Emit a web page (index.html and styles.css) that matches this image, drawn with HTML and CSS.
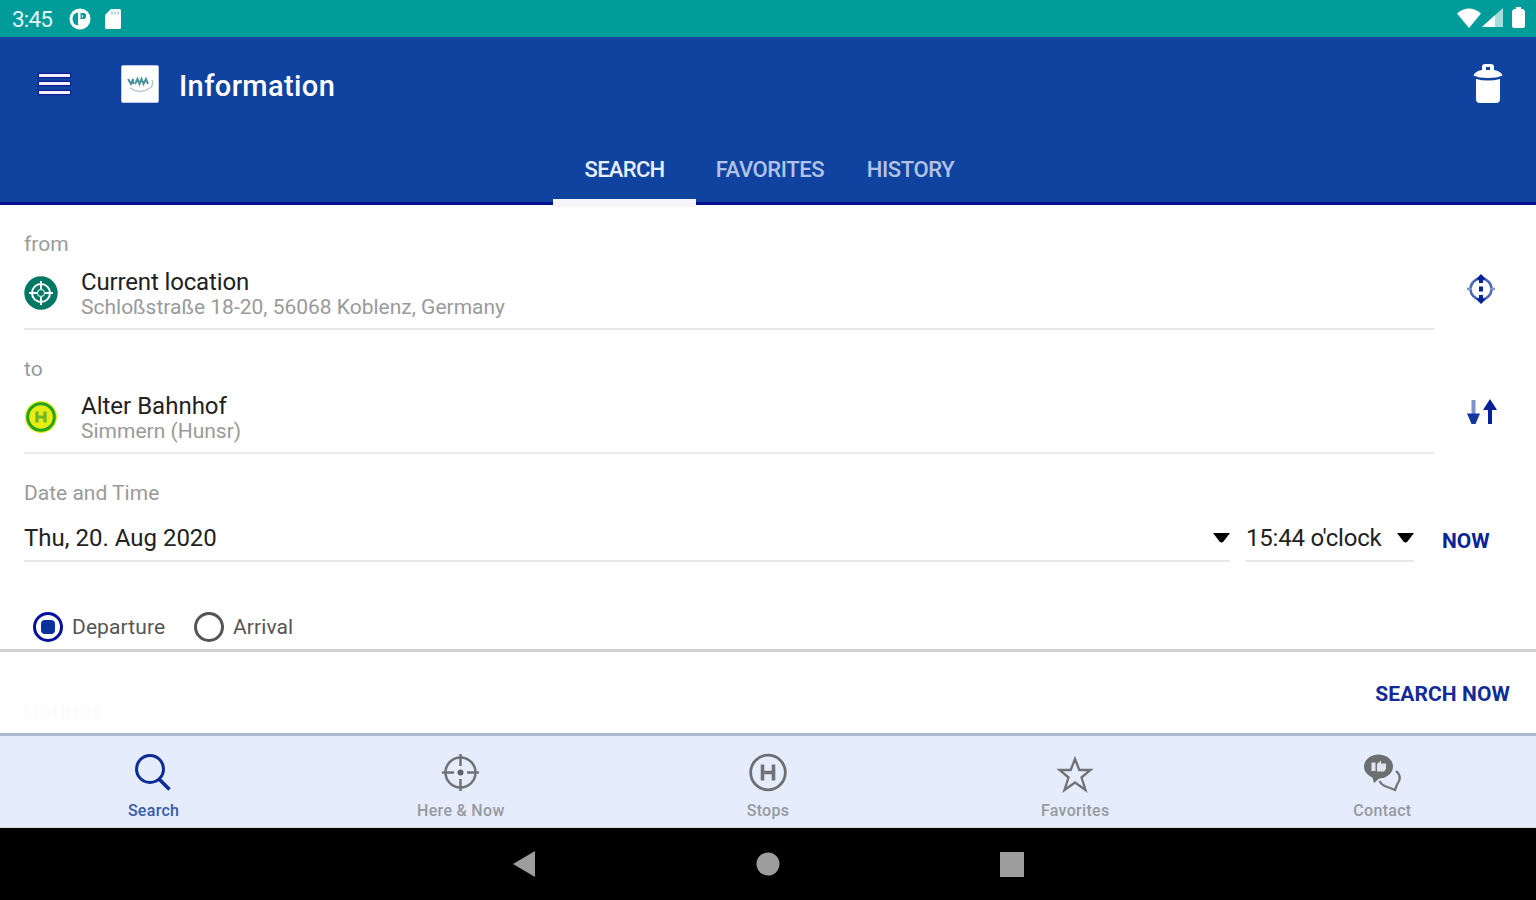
FILE: index.html
```
<!DOCTYPE html>
<html lang="en">
<head>
    <meta charset="UTF-8" />
    <meta name="viewport" content="width=device-width, initial-scale=1.0"/>
    <title>Information</title>
    <link rel="stylesheet" href="styles.css">
</head>
<body>

<div class="status-bar">
    <span class="clock">3:45</span>
    <svg class="status-app" width="22" height="22" viewBox="0 0 22 22">
        <circle cx="11" cy="11" r="10.500" fill="#fff"/>
        <path d="M9 4.500a6.600 6.600 0 0 0 0 13z" fill="#009c9a"/>
        <path d="M11.500 5h3a2.600 3 0 0 1 0 6h-3z" fill="#009c9a"/>
        <path d="M12.800 7.200h1.200v2h-1.200z" fill="#fff"/>
    </svg>
    <svg width="16" height="20" viewBox="0 0 16 20">
        <path d="M6 0h8.500q1.500 0 1.500 1.500v17q0 1.500-1.500 1.500h-13Q0 20 0 18.500V6z" fill="#fff"/>
        <path d="M7 2.500v3M10 2.500v3M13 2.500v3" stroke="#7fcdcb" stroke-width="1.300"/>
    </svg>
    <div class="status-right">
        <svg width="24" height="20" viewBox="0 0 24 20">
            <path d="M0 5.500Q12-4.500 24 5.500L12 20z" fill="#fff"/>
        </svg>
        <svg width="21" height="19" viewBox="0 0 21 19">
            <path d="M0 19L21 0v19z" fill="#a9dddc"/>
            <path d="M0 19L13 7.200V19z" fill="#fff"/>
        </svg>
        <svg class="battery" width="13" height="21" viewBox="0 0 13 21">
            <path d="M4 0h5v2h2q2 1 2 3v14q0 2-2 2H2q-2 0-2-2V5q0-2 2-3h2z" fill="#fff"/>
        </svg>
    </div>
</div>

<header class="header">
    <div class="toolbar">
        <div class="menu-button">
            <span></span>
            <span></span>
            <span></span>
        </div>
        <svg class="logo" width="38" height="38" viewBox="0 0 38 38">
            <rect x="0.500" y="0.500" width="37" height="37" rx="1.500" fill="#fff" stroke="#b9c6e2"/>
            <path d="M7 14l3 5 2-5v5M14 19l2.500-5 2 5 2-5 2 5 2.500-5 2 5" fill="none" stroke="#4c929c" stroke-width="2"/>
            <path d="M9 23q10 7 20 0 4-3 2-8" fill="none" stroke="#b4c6d0" stroke-width="1.500"/>
        </svg>
        <h1>Information</h1>
        <svg class="trash" width="30" height="39" viewBox="0 0 30 39">
            <path d="M9 6V3q0-3 3-3h6q3 0 3 3v3q7 1 8.500 5.500Q24 14 15 14T.5 11.500Q2 7 9 6z" fill="#fff"/>
            <rect x="13" y="3" width="4" height="3" fill="#10439f"/>
            <path d="M3 15q12 3 24 0v20q0 4-4 4H7q-4 0-4-4z" fill="#fff"/>
        </svg>
    </div>
    <nav class="tabs">
        <a class="tab tab-search active">SEARCH</a>
        <a class="tab tab-favorites">FAVORITES</a>
        <a class="tab tab-history">HISTORY</a>
    </nav>
</header>

<main class="form">
    <label class="field-label">from</label>
    <div class="field-row">
        <div class="field">
            <svg class="place-icon" width="34" height="34" viewBox="0 0 34 34">
                <circle cx="17" cy="17" r="16.700" fill="#007864"/>
                <circle cx="17" cy="17" r="9" fill="none" stroke="#fff" stroke-width="2"/>
                <path d="M17 5v9M17 20v9M5 17h9M20 17h9" stroke="#fff" stroke-width="2"/>
                <circle cx="17" cy="17" r="3.500" fill="none" stroke="#b8dcd6" stroke-width="1.500"/>
            </svg>
            <div class="place">
                <div class="place-name current">Current location</div>
                <div class="place-detail">Schloßstraße 18-20, 56068 Koblenz, Germany</div>
            </div>
        </div>
        <svg class="locate" width="28" height="30" viewBox="0 0 28 30">
            <circle cx="14" cy="15" r="10.500" fill="none" stroke="#4a67b5" stroke-width="2.500"/>
            <path d="M0 15h5M23 15h5" stroke="#7f95cd" stroke-width="2.500"/>
            <path d="M14 0l5 5-3 1v3h-4V6L9 5zM14 30l5-5-3-1v-3h-4v3l-3 1z" fill="#06209b"/>
            <rect x="12" y="12.500" width="4" height="5" fill="#06209b"/>
        </svg>
    </div>

    <label class="field-label">to</label>
    <div class="field-row">
        <div class="field">
            <svg class="place-icon" width="34" height="34" viewBox="0 0 34 34">
                <circle cx="17" cy="17" r="16" fill="#e8ec12"/>
                <circle cx="17" cy="17" r="13.300" fill="none" stroke="#23a31f" stroke-width="3"/>
                <path d="M13 11.500v11M21 11.500v11M13 17h8" stroke="#6fb628" stroke-width="3.200"/>
            </svg>
            <div class="place">
                <div class="place-name">Alter Bahnhof</div>
                <div class="place-detail">Simmern (Hunsr)</div>
            </div>
        </div>
        <svg class="swap" width="30" height="25" viewBox="0 0 30 25">
            <path d="M6.500 1v15" stroke="#7f92c9" stroke-width="4"/>
            <path d="M0 14.500h13L8.500 25h-4z" fill="#1238a0"/>
            <path d="M23 0l7 11h-5v14h-4V11h-5z" fill="#06209b"/>
        </svg>
    </div>

    <label class="field-label">Date and Time</label>
    <div class="date-row">
        <div class="select select-date">
            <span>Thu, 20. Aug 2020</span>
            <svg width="17" height="10" viewBox="0 0 17 10"><path d="M0 0h17L10.500 8.500q-2 2-4 0z" fill="#000"/></svg>
        </div>
        <div class="select select-time">
            <span class="time-value">15:44 o'clock</span>
            <svg width="17" height="10" viewBox="0 0 17 10"><path d="M0 0h17L10.500 8.500q-2 2-4 0z" fill="#000"/></svg>
        </div>
        <a class="now">NOW</a>
    </div>

    <div class="radios">
        <span class="radio checked"></span>
        <span class="radio-label departure">Departure</span>
        <span class="radio"></span>
        <span class="radio-label">Arrival</span>
    </div>
</main>

<div class="actions">
    <span class="options">Options</span>
    <a class="search-now">SEARCH NOW</a>
</div>

<nav class="bottom-nav">
    <a class="nav-item active">
        <svg width="40" height="40" viewBox="0 0 40 40">
            <circle cx="16" cy="16" r="13.500" fill="none" stroke="#0c2b96" stroke-width="3"/>
            <path d="M25 26l10.500 10.500" stroke="#0c2b96" stroke-width="3.500"/>
        </svg>
        <span>Search</span>
    </a>
    <a class="nav-item">
        <svg width="40" height="40" viewBox="0 0 40 40">
            <circle cx="19.500" cy="19.500" r="15" fill="none" stroke="#707276" stroke-width="2.500"/>
            <path d="M19.500 1v12M19.500 26v12M1 19.500h12M26 19.500h12" stroke="#707276" stroke-width="2.500"/>
            <circle cx="19.500" cy="19.500" r="3" fill="#606266"/>
        </svg>
        <span class="nav-here">Here &amp; Now</span>
    </a>
    <a class="nav-item">
        <svg width="40" height="40" viewBox="0 0 40 40">
            <circle cx="20" cy="19.500" r="17.300" fill="none" stroke="#6c6e72" stroke-width="2.800"/>
            <path d="M14.500 11.500v16M25.500 11.500v16M14.500 19.500h11" stroke="#707276" stroke-width="3.600" fill="none"/>
        </svg>
        <span>Stops</span>
    </a>
    <a class="nav-item">
        <svg width="40" height="40" viewBox="0 0 40 40">
            <path d="M20 6l4.300 11H35.500l-9 7.500 4 12.500L20 29.500 9.500 37l4-12.500-9-7.500h11.200z" fill="none" stroke="#707276" stroke-width="2.300"/>
        </svg>
        <span class="nav-favorites">Favorites</span>
    </a>
    <a class="nav-item">
        <svg width="40" height="40" viewBox="0 0 40 40">
            <ellipse cx="16.500" cy="13.500" rx="14.500" ry="12" fill="#6c6e70"/>
            <path d="M10 23l2 7 7-6z" fill="#6c6e70"/>
            <path d="M9.500 9.500h4v8.500h-4zM15 11l4-3.500v3h5V16l-2 2.500h-7z" fill="#dfe4ee"/>
            <path d="M34 18q7 6 1 13.500L33 37l-6-2.500Q20 33 17.500 28" fill="none" stroke="#747679" stroke-width="2.300"/>
        </svg>
        <span class="nav-contact">Contact</span>
    </a>
</nav>

<div class="system-nav">
    <svg width="22" height="26" viewBox="0 0 22 26"><path d="M0 13L22 0v26z" fill="#9d9d9d"/></svg>
    <svg width="24" height="24" viewBox="0 0 24 24"><circle cx="12" cy="12" r="11.500" fill="#9d9d9d"/></svg>
    <svg width="24" height="25" viewBox="0 0 24 25"><path d="M0 0h24v25H0z" fill="#9d9d9d"/></svg>
</div>

</body>
</html>
```
FILE: styles.css
```
* {
    box-sizing: border-box;
}

body {
    margin: 0;
    width: 1536px;
    height: 900px;
    overflow: hidden;
    display: flex;
    flex-direction: column;
    background-color: #ffffff;
    font-family: Roboto, "Liberation Sans", sans-serif;
    white-space: nowrap;
}

svg {
    display: block;
    flex: none;
}

/* status bar */
.status-bar {
    height: 37px;
    padding-left: 12px;
    padding-right: 11px;
    display: flex;
    align-items: center;
    background-color: #009c9a;
    color: #e2f5f4;
}

.clock {
    width: 57px;
    font-size: 22.5px;
    letter-spacing: -0.8px;
}

.status-app {
    margin-right: 14px;
}

.status-right {
    margin-left: auto;
    padding-bottom: 2px;
    display: flex;
    align-items: center;
    gap: 1px;
}

.battery {
    margin-left: 8px;
}

/* header */
.header {
    height: 168px;
    background-color: #10439f;
    border-bottom: 3px solid #02108f;
    color: #ffffff;
}

.toolbar {
    height: 95px;
    padding: 0 33px 2px 39px;
    display: flex;
    align-items: center;
}

.menu-button {
    width: 31px;
    height: 20px;
    margin-right: 51px;
    display: flex;
    flex-direction: column;
    justify-content: space-between;
}

.menu-button span {
    height: 3px;
    background-color: #f3f3ff;
    box-shadow: 0 0 1px 1px #0a1d92;
}

.logo {
    margin-right: 20px;
}

h1 {
    margin: 4px 0 0;
    font-size: 29px;
    font-weight: 500;
    line-height: 36px;
    letter-spacing: 0.4px;
}

.trash {
    margin-left: auto;
}

.tabs {
    height: 73px;
    padding-left: 553px;
    display: flex;
}

.tab {
    height: 74px;
    display: flex;
    justify-content: center;
    align-items: center;
    color: #b3c3e5;
    font-size: 22px;
    font-weight: 500;
    letter-spacing: -0.4px;
}

.tab-search {
    width: 143px;
    letter-spacing: -0.7px;
}

.tab-favorites {
    width: 148px;
}

.tab-history {
    width: 133px;
}

.tab.active {
    height: 75px;
    padding-top: 7px;
    color: #e9effa;
    border-bottom: 8px solid #f4f4fa;
}

/* search form */
.form {
    height: 444px;
    padding: 24px 24px 0;
    display: flex;
    flex-direction: column;
}

.field-label {
    height: 31px;
    line-height: 31px;
    font-size: 21px;
    color: #9a9a9a;
}

.field-row {
    height: 93px;
    display: flex;
}

.field-row + .field-label {
    line-height: 32px;
}

.field {
    width: 1410px;
    height: 70px;
    display: flex;
    align-items: center;
    gap: 23px;
    border-bottom: 2px solid #e8e8e8;
}

.place-icon {
    margin-bottom: 2px;
}

.place-name {
    height: 27px;
    line-height: 28px;
    font-size: 24px;
    color: #222222;
}

.current {
    letter-spacing: -0.15px;
}

.place-detail {
    height: 26px;
    line-height: 24px;
    font-size: 21px;
    color: #9a9a9a;
}

.locate {
    margin: 14px 0 0 33px;
}

.swap {
    margin: 15px 0 0 33px;
}

.date-row {
    height: 52px;
    margin-top: 2px;
    display: flex;
}

.select {
    height: 52px;
    padding-top: 5px;
    display: flex;
    align-items: center;
    justify-content: space-between;
    border-bottom: 2px solid #e8e8e8;
    font-size: 24px;
    color: #222222;
}

.select-date {
    width: 1206px;
}

.select-time {
    width: 168px;
    margin-left: 16px;
}

.time-value {
    letter-spacing: -0.2px;
}

.now {
    margin-left: 28px;
    line-height: 62px;
    font-size: 21px;
    font-weight: 700;
    color: #0b2397;
}

.radios {
    margin-top: 50px;
    padding-left: 9px;
    display: flex;
    align-items: center;
}

.radio {
    width: 30px;
    height: 30px;
    border: 3px solid #555555;
    border-radius: 50%;
}

.radio.checked {
    padding: 5px;
    border-color: #06109b;
}

.radio.checked::before {
    content: "";
    display: block;
    width: 14px;
    height: 14px;
    border-radius: 4px;
    background-color: #09319d;
}

.radio-label {
    margin-left: 9px;
    font-size: 21px;
    letter-spacing: 0.1px;
    color: #555555;
}

.departure {
    width: 122px;
}

/* action bar */
.actions {
    height: 84px;
    padding: 2px 26px 0 24px;
    display: flex;
    align-items: center;
    justify-content: space-between;
    border-top: 3px solid #d0d2d3;
}

.options {
    margin-top: 34px;
    font-size: 21px;
    letter-spacing: 1px;
    color: #fbfbfb;
}

.search-now {
    font-size: 21px;
    font-weight: 700;
    letter-spacing: 0.1px;
    color: #132a98;
}

/* bottom navigation */
.bottom-nav {
    height: 95px;
    padding-top: 17px;
    display: flex;
    background-color: #e5edfd;
    border-top: 3px solid #adb9d0;
    border-bottom: 1px solid #d0d5dc;
}

.nav-item {
    flex: 1;
    display: flex;
    flex-direction: column;
    align-items: center;
    font-size: 16px;
    font-weight: 500;
    line-height: 20px;
    letter-spacing: 0.3px;
    color: #96999f;
}

.nav-item span {
    margin-top: 8px;
}

.nav-item.active {
    color: #365aac;
}

/* android buttons */
.system-nav {
    height: 72px;
    padding: 0 512px 0 513px;
    display: flex;
    align-items: center;
    justify-content: space-between;
    background-color: #000000;
}
```
